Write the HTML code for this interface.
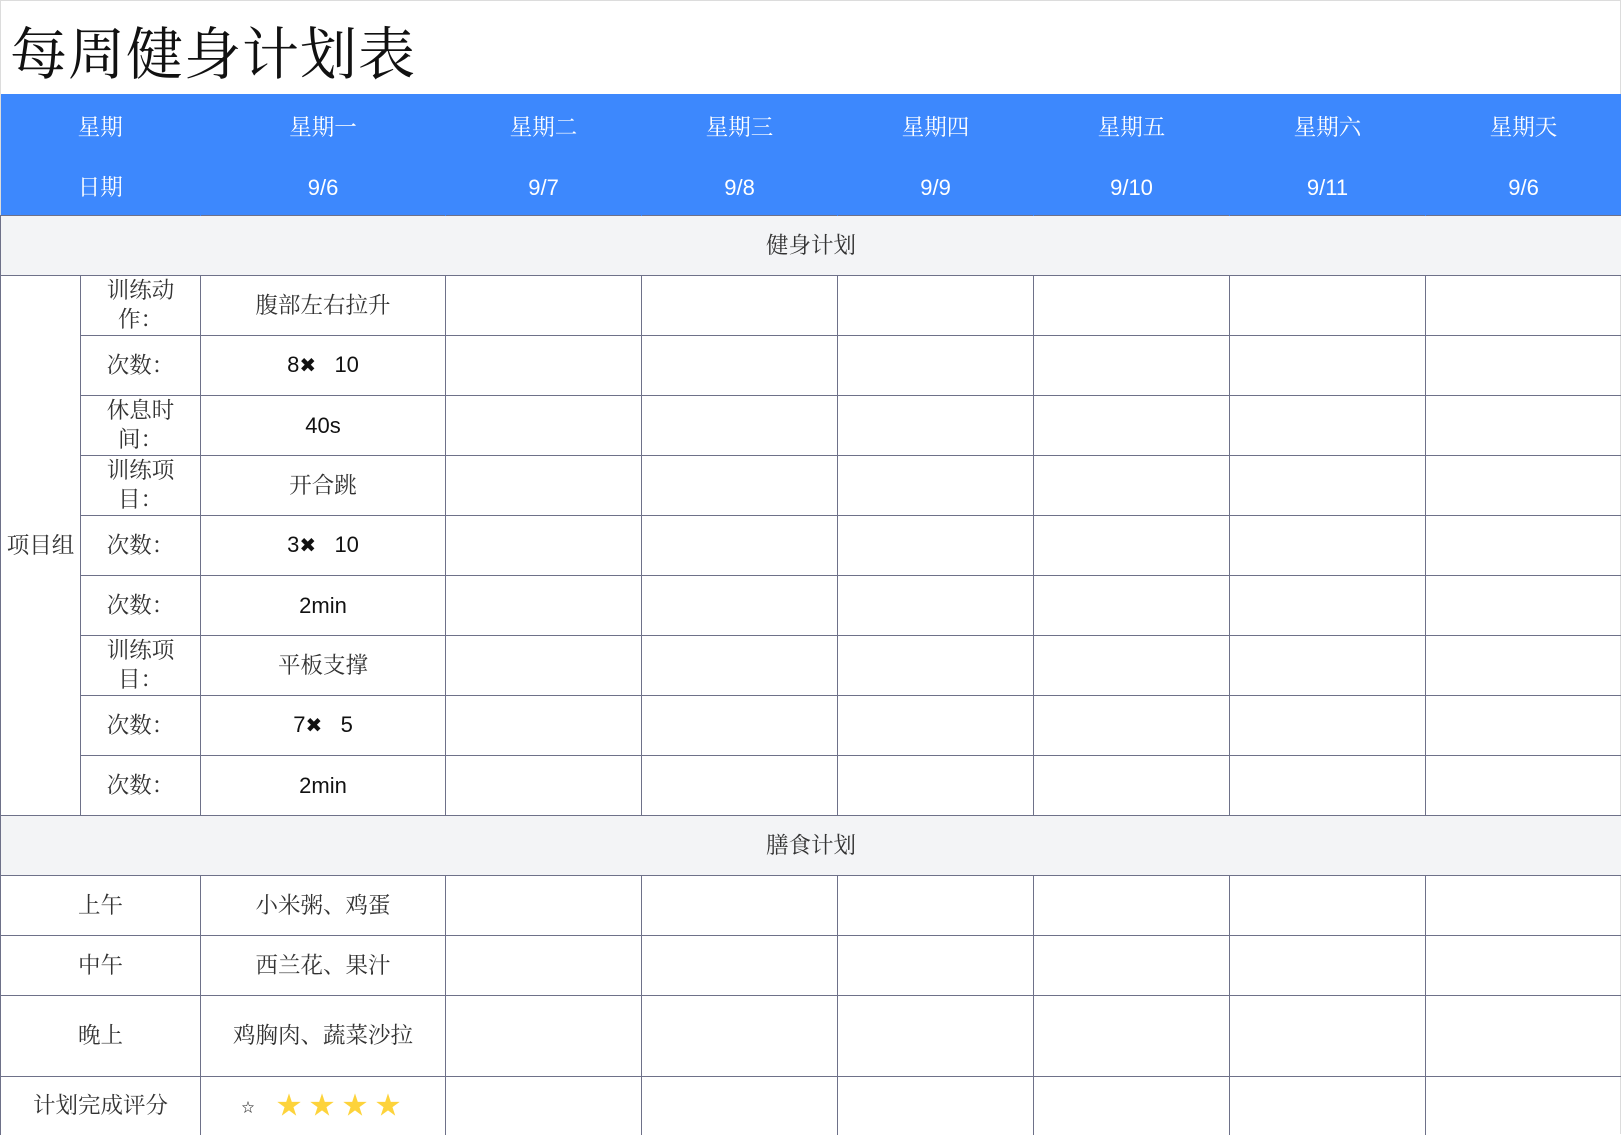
<!DOCTYPE html>
<html><head><meta charset="utf-8"><style>
html,body{margin:0;padding:0;background:#fff;width:1621px;height:1135px;overflow:hidden}
body{font-family:"Liberation Serif","Noto Serif CJK SC",serif;color:#333;position:relative}
.frame{position:absolute;left:0;top:0;width:1619px;height:1133px;border:1px solid #dcdcdc;border-bottom:none}
h1{position:absolute;left:10px;top:22px;margin:0;font-weight:normal;font-size:57px;line-height:68px;color:#111;font-family:"Liberation Serif","Noto Serif CJK SC",serif;letter-spacing:1px}
table{position:absolute;left:0;top:94px;border-collapse:collapse;table-layout:fixed;width:1621px}
td{border:1px solid #6e7189;text-align:center;vertical-align:middle;padding:0;font-size:22.5px;line-height:29px;color:#333;overflow:hidden}
tr.h td{background:#3d88fd;color:#fff;border:none;border-right:1px solid #3d88fd;padding-top:6px}
tr.h td.n{font-family:"Liberation Sans",sans-serif;font-size:22px}
tr.g td{background:#f3f4f6}
td.l{padding:0 22px}
.num{font-family:"Liberation Sans",sans-serif;color:#111;font-size:22px}
.x{font-size:20px}
.star{color:#fdd33b;font-size:25px;margin:0 4px;position:relative;top:2px}
</style></head><body>
<div class="frame"></div>
<h1>每周健身计划表</h1>
<table>
<colgroup><col style="width:80px"><col style="width:120px"><col style="width:245px"><col style="width:196px"><col style="width:196px"><col style="width:196px"><col style="width:196px"><col style="width:196px"><col style="width:196px"></colgroup>
<tr class="h" style="height:60px"><td colspan="2">星期</td><td>星期一</td><td>星期二</td><td>星期三</td><td>星期四</td><td>星期五</td><td>星期六</td><td>星期天</td></tr>
<tr class="h" style="height:61px"><td colspan="2">日期</td><td class="n">9/6</td><td class="n">9/7</td><td class="n">9/8</td><td class="n">9/9</td><td class="n">9/10</td><td class="n">9/11</td><td class="n">9/6</td></tr>
<tr class="g" style="height:60px"><td colspan="9">健身计划</td></tr>
<tr style="height:60px"><td rowspan="9">项目组</td><td class="l">训练动作：</td><td>腹部左右拉升</td><td></td><td></td><td></td><td></td><td></td><td></td></tr>
<tr style="height:60px"><td class="l">次数：</td><td class="num">8<span class="x">✖</span>&nbsp;&nbsp;&nbsp;10</td><td></td><td></td><td></td><td></td><td></td><td></td></tr>
<tr style="height:60px"><td class="l">休息时间：</td><td class="num">40s</td><td></td><td></td><td></td><td></td><td></td><td></td></tr>
<tr style="height:60px"><td class="l">训练项目：</td><td>开合跳</td><td></td><td></td><td></td><td></td><td></td><td></td></tr>
<tr style="height:60px"><td class="l">次数：</td><td class="num">3<span class="x">✖</span>&nbsp;&nbsp;&nbsp;10</td><td></td><td></td><td></td><td></td><td></td><td></td></tr>
<tr style="height:60px"><td class="l">次数：</td><td class="num">2min</td><td></td><td></td><td></td><td></td><td></td><td></td></tr>
<tr style="height:60px"><td class="l">训练项目：</td><td>平板支撑</td><td></td><td></td><td></td><td></td><td></td><td></td></tr>
<tr style="height:60px"><td class="l">次数：</td><td class="num">7<span class="x">✖</span>&nbsp;&nbsp;&nbsp;5</td><td></td><td></td><td></td><td></td><td></td><td></td></tr>
<tr style="height:60px"><td class="l">次数：</td><td class="num">2min</td><td></td><td></td><td></td><td></td><td></td><td></td></tr>
<tr class="g" style="height:60px"><td colspan="9">膳食计划</td></tr>
<tr style="height:60px"><td colspan="2">上午</td><td>小米粥、鸡蛋</td><td></td><td></td><td></td><td></td><td></td><td></td></tr>
<tr style="height:60px"><td colspan="2">中午</td><td>西兰花、果汁</td><td></td><td></td><td></td><td></td><td></td><td></td></tr>
<tr style="height:81px"><td colspan="2">晚上</td><td>鸡胸肉、蔬菜沙拉</td><td></td><td></td><td></td><td></td><td></td><td></td></tr>
<tr style="height:59px"><td colspan="2">计划完成评分</td><td><span style="font-size:13px;color:#222;margin-right:18px">☆</span><span class="star">★</span><span class="star">★</span><span class="star">★</span><span class="star">★</span></td><td></td><td></td><td></td><td></td><td></td><td></td></tr>
</table>
</body></html>
